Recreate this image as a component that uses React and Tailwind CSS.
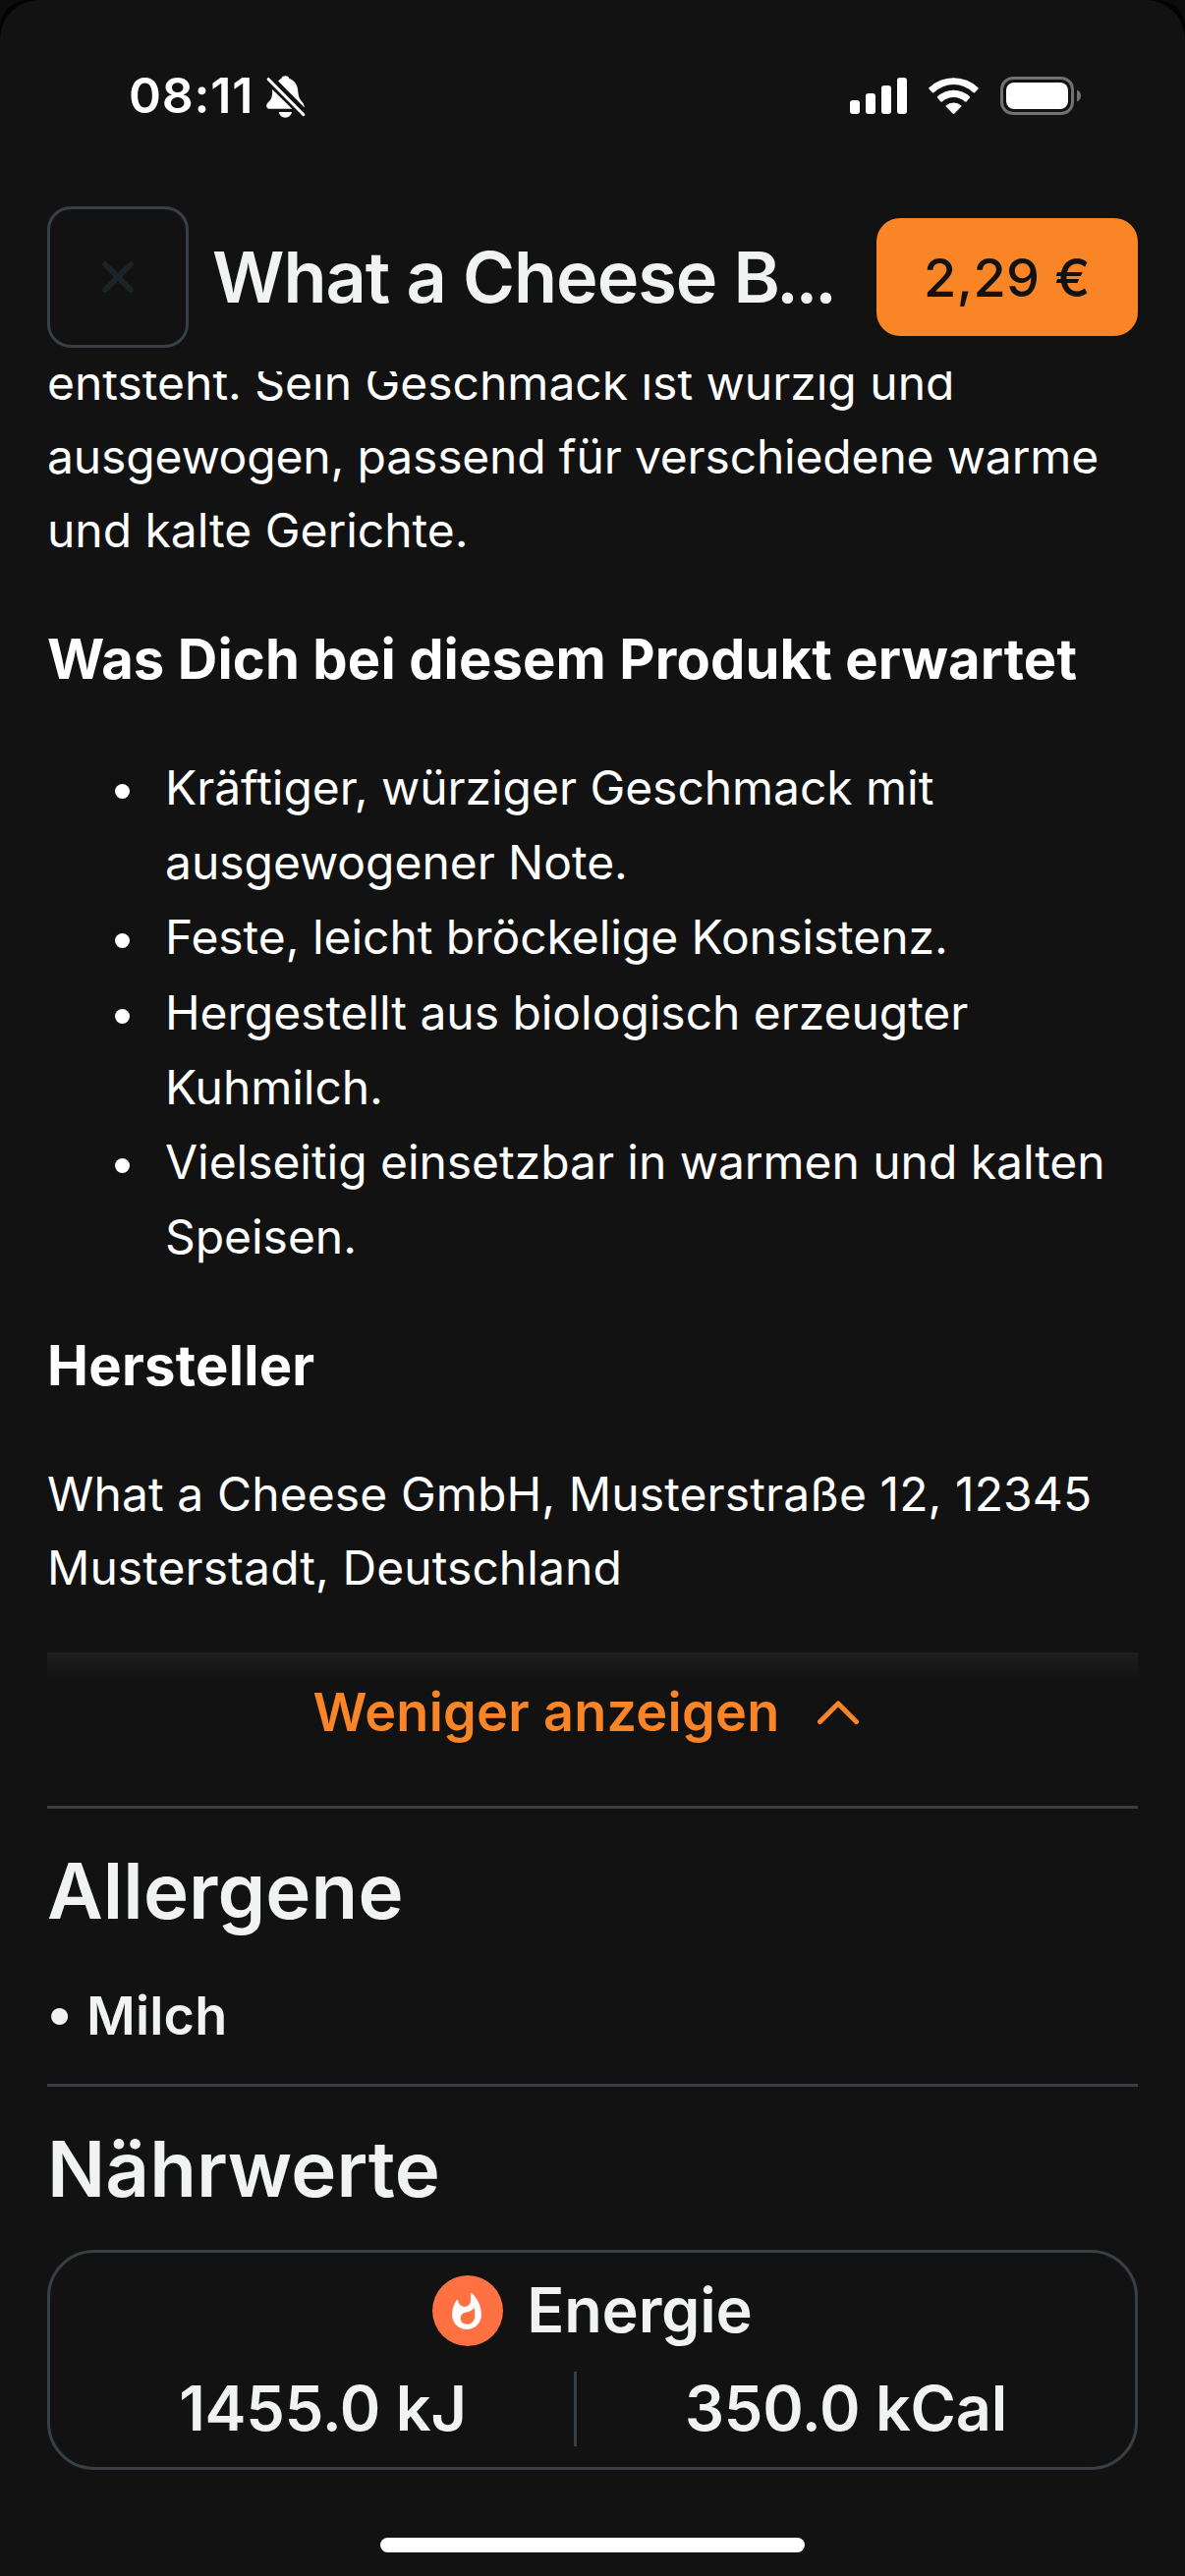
const expectations = [
  "Kräftiger, würziger Geschmack mit ausgewogener Note.",
  "Feste, leicht bröckelige Konsistenz.",
  "Hergestellt aus biologisch erzeugter Kuhmilch.",
  "Vielseitig einsetzbar in warmen und kalten Speisen.",
];

function MutedBellIcon() {
  return (
    <svg viewBox="0 0 120 130" className="mt-0.5 h-[43px] w-10" fill="currentColor">
      <path d="M36 17C39 13 43 10 46 8C48 3 52 1 58 1s10 2 12 7C80 12 90 21 94 32C98 44 97 58 101 68C105 78 117 84 117 98Z" />
      <path d="M18 42L79 102H8C3 102 0 98 0 93C0 84 10 80 14 72C18 64 18 54 18 42Z" />
      <path d="M38 112H78C76 122 69 129 58 129S40 122 38 112Z" />
      <path d="M6 11L114 120" stroke="currentColor" strokeWidth="9" strokeLinecap="round" />
    </svg>
  );
}

function SignalIcon() {
  return (
    <svg viewBox="0 0 58 37" className="h-[37px] w-[58px]" fill="currentColor">
      <rect x="0" y="23" width="10" height="14" rx="3" />
      <rect x="16" y="16" width="10" height="21" rx="3" />
      <rect x="32" y="8" width="10" height="29" rx="3" />
      <rect x="48" y="0" width="10" height="37" rx="3" />
    </svg>
  );
}

function WifiIcon() {
  return (
    <svg viewBox="0 0 51 37" className="h-[37px] w-[51px]" fill="currentColor">
      <path d="M.5 10.300A36 36 0 0 1 50.500 10.300Q51 11 50.500 11.600L47 15.200Q46.300 15.700 45.600 15.200A29 29 0 0 0 5.400 15.200Q4.700 15.700 4 15.200L.5 11.600Q0 11 .5 10.300Z" />
      <path d="M9 19.300A24 24 0 0 1 42 19.300Q42.500 20 42 20.600L38.500 24.500Q37.800 25 37.100 24.500A17 17 0 0 0 13.900 24.500Q13.200 25 12.500 24.500L9 20.600Q8.500 20 9 19.300Z" />
      <path d="M17.700 28.500A12 12 0 0 1 33.300 28.500Q33.700 29 33.300 29.600L26.200 36.700Q25.500 37.200 24.800 36.700L17.700 29.600Q17.300 29 17.700 28.500Z" />
    </svg>
  );
}

function BatteryIcon() {
  return (
    <svg viewBox="0 0 82 39" className="h-[39px] w-[82px]">
      <rect x="1.500" y="1.500" width="72" height="36" rx="11.500" fill="none" stroke="#717171" strokeWidth="3" />
      <rect x="6" y="6" width="63" height="27" rx="8" fill="#fff" />
      <path d="M78 13.500C80.500 14.500 82 16.800 82 19.500S80.500 24.500 78 25.500Z" fill="#717171" />
    </svg>
  );
}

function FlameIcon() {
  return (
    <svg viewBox="0 0 90 112" className="-ml-0.5 mt-px h-[37px] w-[30px]" fill="#fff" fillRule="evenodd">
      <path d="M57 2C57 0 59 -1 61 1C79 17 90 42 90 66C90 93 70 112 45 112S0 93 0 66C0 49 5 34 14 22C15 20 18 20 18 23C20 34 27 42 38 42C50 42 57 34 57 23ZM67 47C61 54 54 57 44 59C33 61 26 67 26 78C26 89 34 96 45 96C60 96 70 86 70 70C70 62 70 55 69 48C69 46 68 46 67 47Z" />
    </svg>
  );
}

function StatusBar() {
  return (
    <div className="flex h-[210px] shrink-0 items-start justify-between pl-[131px] pr-[106px] pt-[72px] text-white">
      <div className="flex h-[51px] items-center gap-[13px]">
        <span className="text-[50px] font-semibold leading-[51px] tracking-[0.8px]">08:11</span>
        <MutedBellIcon />
      </div>
      <div className="flex h-[51px] items-center gap-[22px]">
        <SignalIcon />
        <WifiIcon />
        <BatteryIcon />
      </div>
    </div>
  );
}

function Header() {
  return (
    <header className="flex h-[168px] shrink-0 items-start px-12">
      <button aria-label="Schließen" className="flex size-36 items-center justify-center rounded-3xl border-3 border-[#374145]">
        <svg viewBox="0 0 32 32" className="size-8" fill="none" stroke="#1b2428" strokeWidth="5.500" strokeLinecap="round">
          <path d="M3 3L29 29M29 3L3 29" />
        </svg>
      </button>
      <h1 className="ml-6 mt-7 whitespace-nowrap text-[72px] font-semibold leading-[88px] tracking-[-1px] text-[#f1f3f2]">
        What a Cheese B<span className="-ml-[3px] tracking-[-3.4px]">...</span>
      </h1>
      <div className="ml-auto mt-3 flex h-30 w-[266px] items-center justify-center rounded-3xl bg-[#fa8526] text-[54px] font-medium tracking-[0.4px] text-[#121212]">
        2,29 €
      </div>
    </header>
  );
}

function Paragraph({ children }) {
  return <p className="whitespace-nowrap text-[48px] leading-[75px]">{children}</p>;
}

function Description() {
  return (
    <section className="overflow-hidden px-12 text-white">
      <div className="-mt-[26px]">
        <Paragraph>
          <span className="tracking-[-0.02px]">entsteht. Sein Geschmack ist würzig und</span><br />
          <span className="tracking-[-0.17px]">ausgewogen, passend für verschiedene warme</span><br />
          <span className="tracking-[-0.03px]">und kalte Gerichte.</span>
        </Paragraph>
        <h3 className="mt-[50px] whitespace-nowrap text-[56.16px] font-bold leading-[88px] tracking-[0.1px]">
          Was Dich bei diesem Produkt erwartet
        </h3>
        <ul className="mt-[49px] pl-[69px] text-[48px] leading-[76.17px] tracking-[-0.05px]">
          {expectations.map((item) => (
            <li key={item} className="flex items-start gap-9">
              <span className="mt-[34px] size-[15px] shrink-0 rounded-full bg-white" />
              <span className="w-[960px]">{item}</span>
            </li>
          ))}
        </ul>
        <h3 className="mt-[49px] text-[56.16px] font-bold leading-[88px] tracking-[0.25px]">Hersteller</h3>
        <div className="mt-[49px]">
          <Paragraph>
            <span className="tracking-[0.1px]">What a Cheese GmbH, Musterstraße 12, 12345</span><br />
            <span className="tracking-[0.06px]">Musterstadt, Deutschland</span>
          </Paragraph>
        </div>
      </div>
    </section>
  );
}

function ShowLess() {
  return (
    <div className="mx-12 mt-[49px] h-[156px] shrink-0">
      <div className="h-7 bg-linear-to-b from-[#1f1f1f] to-[#121212]" />
      <div className="flex h-[66px] items-center justify-center pr-[13px] text-[#fa8526]">
        <span className="text-[54px] font-semibold leading-[66px] tracking-[0.27px]">Weniger anzeigen</span>
        <svg viewBox="0 0 42 24" className="ml-[39px] h-6 w-[42px]" fill="none" stroke="currentColor" strokeWidth="5" strokeLinecap="round" strokeLinejoin="round">
          <path d="M2.500 21.500L21 3L39.500 21.500" />
        </svg>
      </div>
    </div>
  );
}

function Divider() {
  return <div className="mx-12 h-[3px] shrink-0 bg-[#374145]" />;
}

function SectionTitle({ children }) {
  return <h2 className="mt-9 px-12 text-[78px] font-semibold leading-[96px] tracking-[0.1px]">{children}</h2>;
}

function EnergyCard() {
  return (
    <div className="mx-12 mt-[34px] h-[224px] shrink-0 rounded-[48px] border-3 border-[#374145] px-6 pt-[23px] text-[63px] font-semibold leading-[74px] tracking-[-0.2px]">
      <div className="flex h-18 items-center justify-center gap-6">
        <span className="flex size-18 items-center justify-center rounded-full bg-[#ff7043]">
          <FlameIcon />
        </span>
        <span className="pb-0.5">Energie</span>
      </div>
      <div className="mt-[26px] flex h-[76px] items-center">
        <span className="w-[509px] pb-0.5 pr-0.5 text-center">1455.0 kJ</span>
        <span className="h-full w-[3px] bg-[#374145]" />
        <span className="flex-1 pb-0.5 pl-1 text-center">350.0 kCal</span>
      </div>
    </div>
  );
}

export default function App() {
  return (
    <div className="h-[2622px] w-[1206px] overflow-hidden bg-[#0c0c0c] font-['Inter',sans-serif]">
      <div className="h-full rounded-t-[28px] bg-[#030303]">
        <main className="flex h-full flex-col rounded-t-[40px] bg-[#121212] text-[#f1f3f2]">
          <StatusBar />
          <Header />
          <Description />
          <ShowLess />
          <Divider />
          <SectionTitle>Allergene</SectionTitle>
          <div className="mt-[46px] mb-9 pl-[47px] text-[54px] font-semibold leading-[66px] tracking-[0.15px]">
            <span className="relative -top-[3px]">•</span> Milch
          </div>
          <Divider />
          <SectionTitle>Nährwerte</SectionTitle>
          <EnergyCard />
          <div className="mx-auto mt-[69px] h-[15px] w-[432px] shrink-0 rounded-full bg-white" />
        </main>
      </div>
    </div>
  );
}
